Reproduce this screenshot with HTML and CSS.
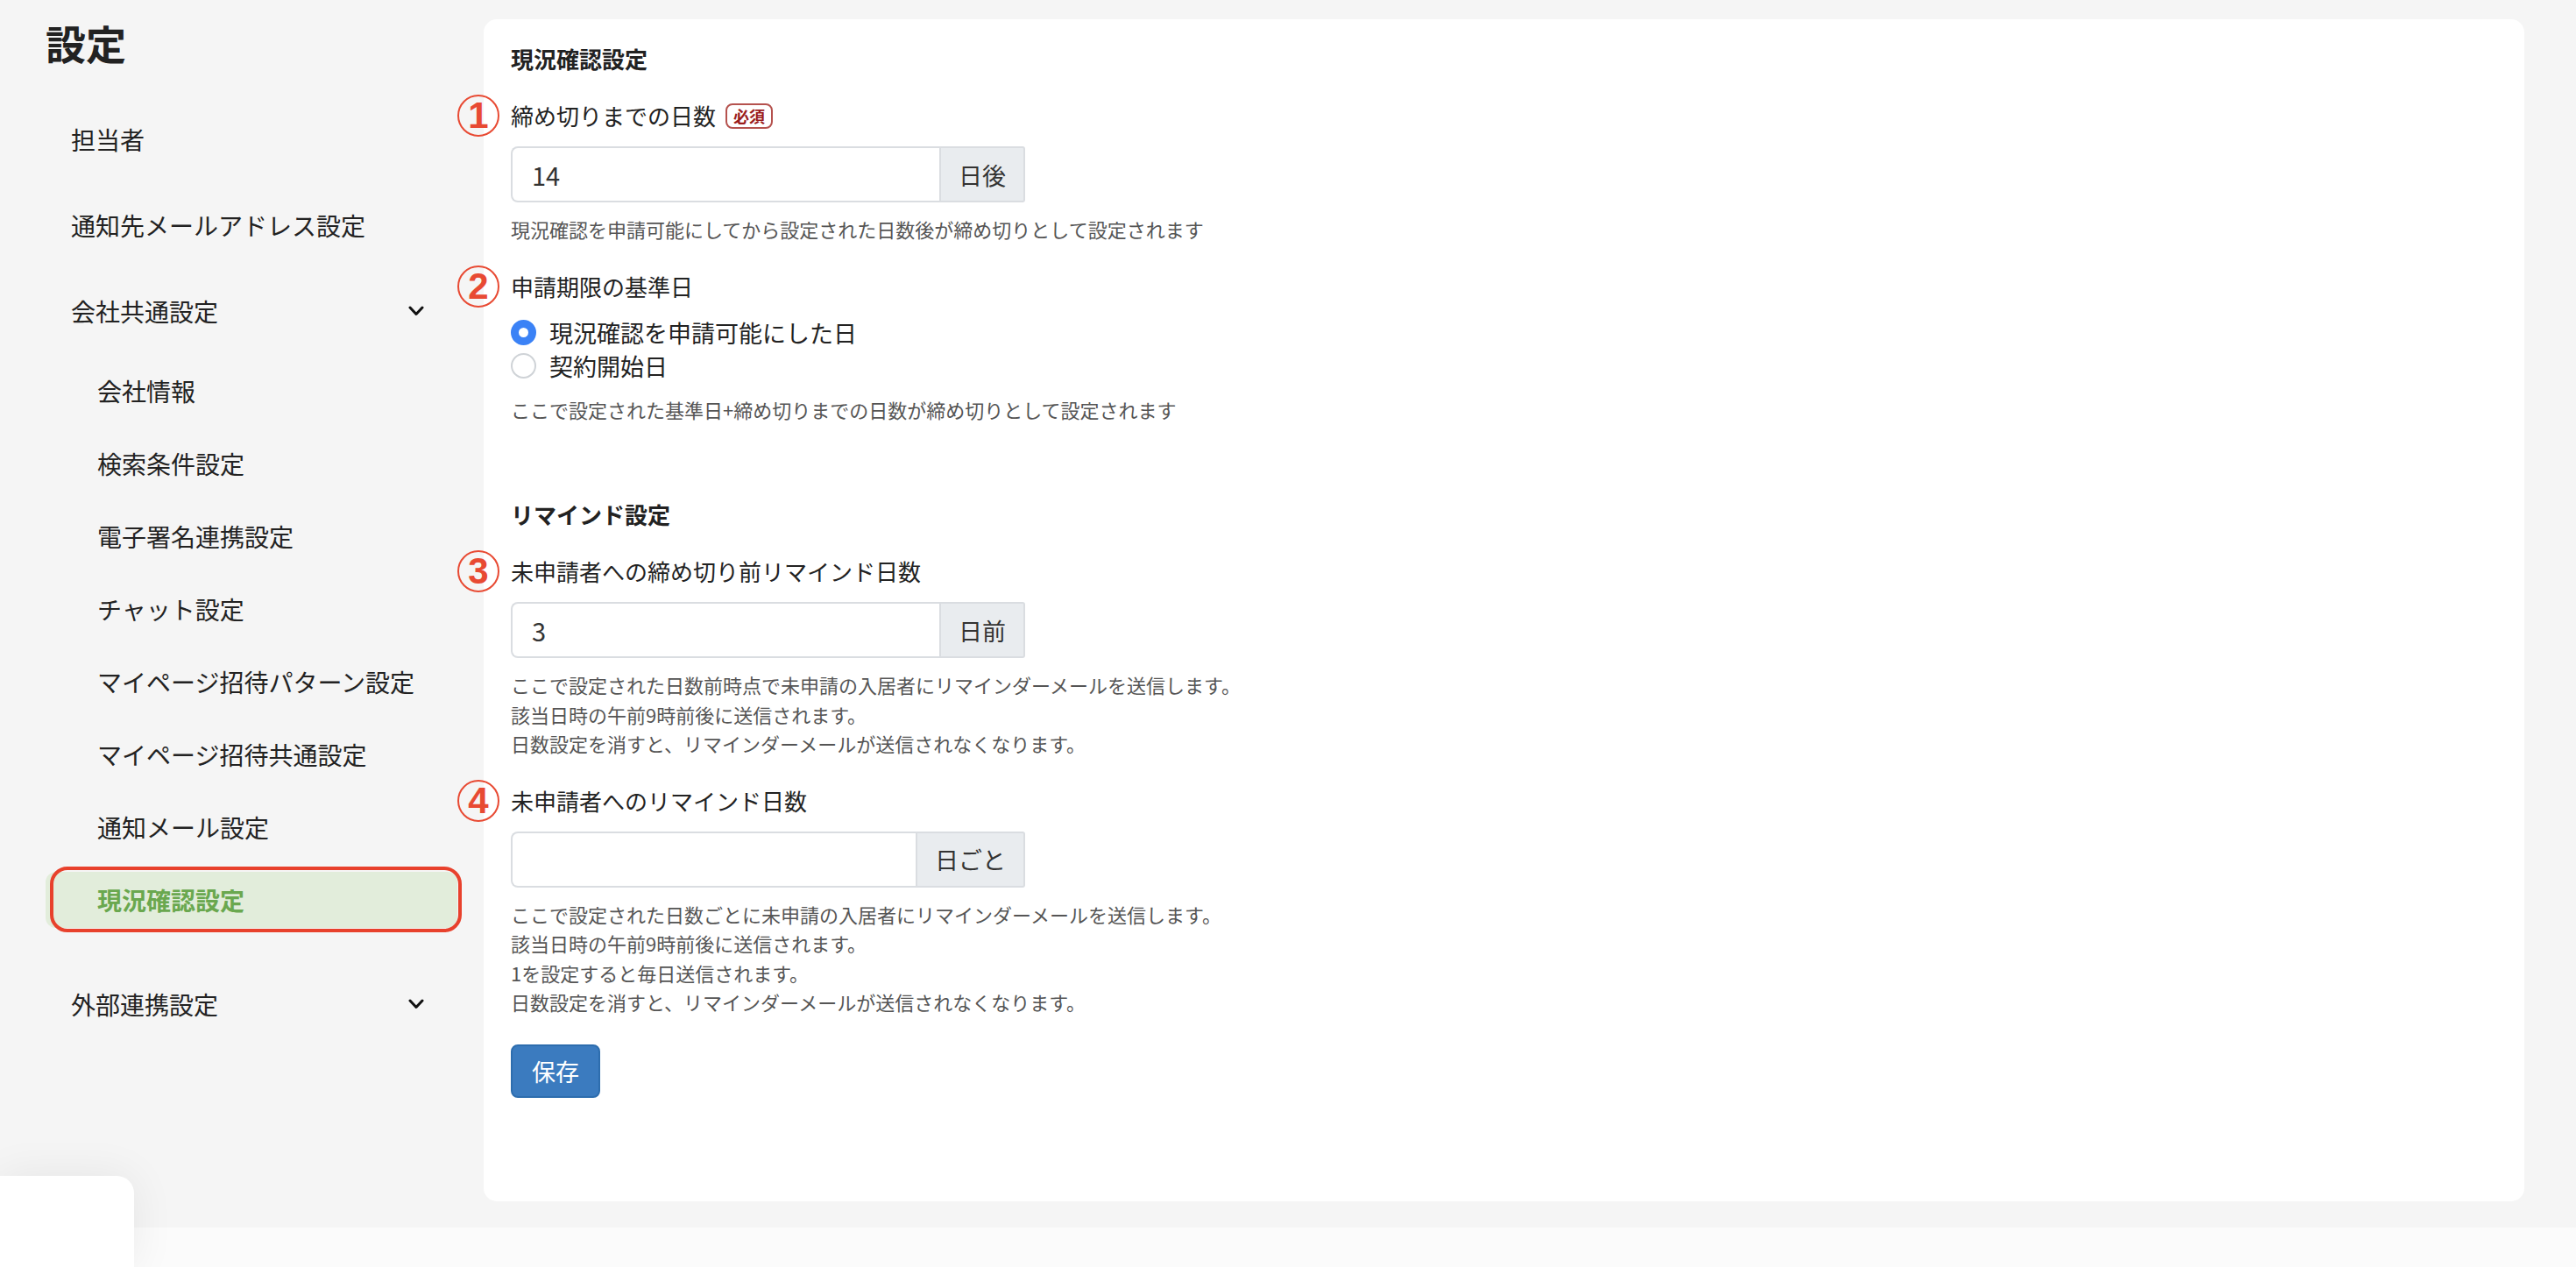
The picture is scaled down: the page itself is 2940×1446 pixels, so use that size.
FILE: index.html
```html
<!DOCTYPE html>
<html lang="ja">
<head>
    <meta charset="UTF-8">
    <meta name="viewport" content="width=device-width, initial-scale=1.0">
    <title>設定</title>
    <link rel="stylesheet" href="styles.css">
</head>
<body>
    <div class="layout">
        <aside class="sidebar">
            <h1 class="sidebar-title">設定</h1>
            <nav class="nav">
                <a class="nav-item" href="#">担当者</a>
                <a class="nav-item" href="#">通知先メールアドレス設定</a>
                <div class="nav-item">
                    <span>会社共通設定</span>
                    <svg class="chevron" width="18" height="12" viewBox="0 0 18 12"><polyline points="2,2 9,9.5 16,2" fill="none" stroke="#111" stroke-width="3" stroke-linecap="round" stroke-linejoin="round"/></svg>
                </div>
                <div class="nav-sub">
                    <a class="nav-sub-item" href="#">会社情報</a>
                    <a class="nav-sub-item" href="#">検索条件設定</a>
                    <a class="nav-sub-item" href="#">電子署名連携設定</a>
                    <a class="nav-sub-item" href="#">チャット設定</a>
                    <a class="nav-sub-item" href="#">マイページ招待パターン設定</a>
                    <a class="nav-sub-item" href="#">マイページ招待共通設定</a>
                    <a class="nav-sub-item" href="#">通知メール設定</a>
                    <a class="nav-sub-item active" href="#">現況確認設定</a>
                </div>
                <div class="nav-item">
                    <span>外部連携設定</span>
                    <svg class="chevron" width="18" height="12" viewBox="0 0 18 12"><polyline points="2,2 9,9.5 16,2" fill="none" stroke="#111" stroke-width="3" stroke-linecap="round" stroke-linejoin="round"/></svg>
                </div>
            </nav>
        </aside>

        <main class="main">
            <section class="card">
                <h2 class="section-title">現況確認設定</h2>

                <div class="field">
                    <label class="field-label" for="deadline"><span class="marker">1</span>締め切りまでの日数<span class="badge">必須</span></label>
                    <div class="input-group">
                        <input class="input" type="text" id="deadline" value="14">
                        <span class="addon">日後</span>
                    </div>
                    <p class="help">現況確認を申請可能にしてから設定された日数後が締め切りとして設定されます</p>
                </div>

                <div class="field">
                    <div class="field-label"><span class="marker">2</span>申請期限の基準日</div>
                    <div class="radio-group">
                        <label class="radio"><input type="radio" name="base" checked>現況確認を申請可能にした日</label>
                        <label class="radio"><input type="radio" name="base">契約開始日</label>
                    </div>
                    <p class="help">ここで設定された基準日+締め切りまでの日数が締め切りとして設定されます</p>
                </div>

                <h2 class="section-title section-gap">リマインド設定</h2>

                <div class="field">
                    <label class="field-label" for="before"><span class="marker">3</span>未申請者への締め切り前リマインド日数</label>
                    <div class="input-group">
                        <input class="input" type="text" id="before" value="3">
                        <span class="addon">日前</span>
                    </div>
                    <p class="help">ここで設定された日数前時点で未申請の入居者にリマインダーメールを送信します。<br>該当日時の午前9時前後に送信されます。<br>日数設定を消すと、リマインダーメールが送信されなくなります。</p>
                </div>

                <div class="field">
                    <label class="field-label" for="every"><span class="marker">4</span>未申請者へのリマインド日数</label>
                    <div class="input-group">
                        <input class="input" type="text" id="every" value="">
                        <span class="addon">日ごと</span>
                    </div>
                    <p class="help">ここで設定された日数ごとに未申請の入居者にリマインダーメールを送信します。<br>該当日時の午前9時前後に送信されます。<br>1を設定すると毎日送信されます。<br>日数設定を消すと、リマインダーメールが送信されなくなります。</p>
                </div>

                <button type="button" class="btn-save">保存</button>
            </section>
        </main>
    </div>
    <footer class="footer"></footer>
    <div class="widget"></div>
</body>
</html>
```

FILE: styles.css
```css
body {
    margin: 0;
    background: #f5f5f5;
    font-family: "Noto Sans CJK JP", "Noto Sans", sans-serif;
    color: #222;
}
.layout {
    display: flex;
    height: 1401px;
}
.sidebar {
    width: 552px;
    flex-shrink: 0;
    box-sizing: border-box;
    padding: 20px 30px 0 52px;
}
.sidebar-title {
    margin: 0;
    font-size: 46px;
    line-height: 56px;
    font-weight: bold;
    color: #222;
}
.nav {
    display: flex;
    flex-direction: column;
    margin-top: 34px;
}
.nav-item {
    height: 98px;
    display: flex;
    align-items: center;
    justify-content: space-between;
    padding: 0 38px 0 29px;
    font-size: 28px;
    color: #222;
    text-decoration: none;
}
.nav-sub {
    display: flex;
    flex-direction: column;
    padding-bottom: 29px;
}
.nav-sub-item {
    position: relative;
    height: 64px;
    line-height: 64px;
    margin: 9.5px 0;
    padding-left: 59px;
    border-radius: 12px;
    font-size: 28px;
    color: #222;
    text-decoration: none;
}
.nav-sub-item.active {
    background: #e2eddb;
    color: #6aa84f;
    font-weight: bold;
}
.nav-sub-item.active::after {
    content: "";
    position: absolute;
    top: -6px;
    bottom: -5px;
    left: 5px;
    right: -5px;
    border: 4px solid #e8412c;
    border-radius: 20px;
}
.main {
    flex: 1;
    display: flex;
    flex-direction: column;
    padding: 22px 59px 30px 0;
}
.card {
    flex: 1;
    background: #fff;
    border-radius: 15px;
    padding: 28px 31px 0;
}
.section-title {
    margin: 0;
    font-size: 26px;
    line-height: 34px;
    font-weight: bold;
    color: #222;
}
.section-gap {
    margin-top: 86px;
}
.field {
    margin-top: 28px;
}
.field-label {
    position: relative;
    display: flex;
    align-items: center;
    font-size: 26px;
    line-height: 40px;
    color: #222;
}
.marker {
    position: absolute;
    left: -61px;
    top: 50%;
    transform: translateY(-50%);
    width: 48px;
    height: 48px;
    box-sizing: border-box;
    border: 2.5px solid #e84a33;
    border-radius: 50%;
    display: flex;
    align-items: center;
    justify-content: center;
    color: #e84a33;
    font-family: "Liberation Sans", Arial, sans-serif;
    font-weight: bold;
    font-size: 42px;
    line-height: 1;
}
.badge {
    margin-left: 11px;
    width: 54px;
    height: 29px;
    box-sizing: border-box;
    border: 2px solid #b5524e;
    border-radius: 8px;
    display: flex;
    align-items: center;
    justify-content: center;
    font-size: 18px;
    font-weight: bold;
    color: #9b1c1c;
    line-height: 1;
}
.input-group {
    display: flex;
    width: 587px;
    height: 64px;
    margin-top: 15px;
}
.input {
    flex: 1;
    min-width: 0;
    border: 2px solid #dadde1;
    border-right: none;
    border-radius: 8px 0 0 8px;
    padding: 0 22px;
    font-family: inherit;
    font-size: 29px;
    color: #333;
    outline: none;
}
.addon {
    display: flex;
    align-items: center;
    padding: 0 20px;
    background: #e9ecef;
    border: 2px solid #dadde1;
    border-radius: 0 3px 3px 0;
    font-size: 27px;
    color: #333;
}
.help {
    margin: 14px 0 0;
    font-size: 22px;
    line-height: 33.5px;
    color: #555;
}
.radio-group {
    margin-top: 14px;
}
.radio {
    display: flex;
    align-items: center;
    gap: 15px;
    height: 38px;
    font-size: 27px;
    color: #222;
}
.radio input {
    appearance: none;
    margin: 0;
    width: 29px;
    height: 29px;
    box-sizing: border-box;
    border: 2px solid #cfd3d7;
    border-radius: 50%;
    background: #fff;
}
.radio input:checked {
    border: 9.5px solid #3b82f6;
}
.btn-save {
    margin-top: 31px;
    height: 61px;
    padding: 0 22px;
    background: #3b7bbf;
    border: 2px solid #2d6dae;
    border-radius: 8px;
    color: #fff;
    font-family: inherit;
    font-size: 27px;
    cursor: pointer;
}
.footer {
    height: 45px;
    background: #fbfbfb;
}
.widget {
    position: fixed;
    left: 0;
    bottom: 0;
    width: 153px;
    height: 104px;
    background: #fff;
    border-top-right-radius: 20px;
    box-shadow: 0 0 50px rgba(0, 0, 0, 0.07);
}
```
